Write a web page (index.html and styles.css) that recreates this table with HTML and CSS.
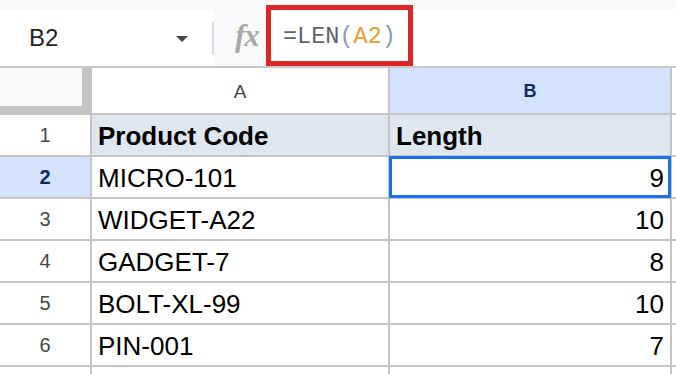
FILE: index.html
```html
<!DOCTYPE html>
<html>
<head>
<meta charset="utf-8">
<link rel="stylesheet" href="styles.css">
</head>
<body>
<div class="topband"></div>
<div class="toolbar">
  <div class="namebox">
    <span class="cellref">B2</span>
    <svg class="caret" width="12" height="6" viewBox="0 0 12 6"><path d="M0 0 L12 0 L6 6 Z" fill="#444746"/></svg>
  </div>
  <div class="sep"></div>
  <div class="fxarea"><span class="fx">fx</span></div>
  <div class="formulaarea">
    <div class="formula-hl"><span class="f-eq">=LEN</span><span class="f-par">(</span><span class="f-ref">A2</span><span class="f-par">)</span></div>
  </div>
</div>
<div class="grid">
  <div class="corner"></div>
  <div class="colhead">A</div>
  <div class="colhead sel">B</div>
  <div class="cell"></div>

  <div class="rowhead">1</div>
  <div class="cell hdr">Product Code</div>
  <div class="cell hdr">Length</div>
  <div class="cell"></div>

  <div class="rowhead sel">2</div>
  <div class="cell">MICRO-101</div>
  <div class="cell num active">9</div>
  <div class="cell"></div>

  <div class="rowhead">3</div>
  <div class="cell">WIDGET-A22</div>
  <div class="cell num">10</div>
  <div class="cell"></div>

  <div class="rowhead">4</div>
  <div class="cell">GADGET-7</div>
  <div class="cell num">8</div>
  <div class="cell"></div>

  <div class="rowhead">5</div>
  <div class="cell">BOLT-XL-99</div>
  <div class="cell num">10</div>
  <div class="cell"></div>

  <div class="rowhead">6</div>
  <div class="cell">PIN-001</div>
  <div class="cell num">7</div>
  <div class="cell"></div>

  <div class="rowhead"></div>
  <div class="cell"></div>
  <div class="cell"></div>
  <div class="cell"></div>
</div>
</body>
</html>
```
FILE: styles.css
```css
html, body {
  margin: 0;
  padding: 0;
  width: 676px;
  height: 374px;
  overflow: hidden;
  background: #ffffff;
  font-family: "Liberation Sans", Arial, sans-serif;
}
.topband {
  height: 10px;
  background: #f8f9fb;
}
.toolbar {
  display: flex;
  height: 56px;
  border-bottom: 2px solid #c7c7c7;
  background: #ffffff;
}
.namebox {
  width: 212px;
  display: flex;
  align-items: center;
  background: #ffffff;
}
.cellref {
  margin-left: 29px;
  font-size: 24px;
  color: #1f1f1f;
  flex: 1;
}
.caret {
  margin-right: 24px;
  margin-top: 2px;
}
.sep {
  width: 2px;
  height: 33px;
  margin-top: 12px;
  background: #d6dde7;
}
.fxarea {
  width: 52px;
  background: #f8f9fa;
  display: flex;
  align-items: center;
  justify-content: flex-start;
}
.fx {
  margin-left: 21px;
  font-family: "Liberation Serif", serif;
  font-style: italic;
  font-weight: bold;
  font-size: 31px;
  color: #a9a9a9;
  letter-spacing: -1px;
  margin-top: -4px;
}
.formulaarea {
  flex: 1;
  background: #ffffff;
  display: flex;
  align-items: flex-start;
  padding-left: 5px;
}
.formula-hl {
  width: 137px;
  height: 51px;
  box-sizing: border-box;
  outline: 5px solid #dc2626;
  display: flex;
  align-items: center;
  padding-left: 12px;
  padding-top: 2px;
  font-family: "Liberation Mono", monospace;
  font-size: 23.5px;
}
.f-eq { color: #5f6368; }
.f-par { color: #8b9bb0; }
.f-ref { color: #f09a36; }

.grid {
  display: grid;
  grid-template-columns: 90px 296px 280px 4px;
  grid-template-rows: 45px repeat(6, 40px) 7px;
  gap: 2px;
  background: #c4c4c4;
}
.corner {
  background: #f8f9fa;
  border-right: 8px solid #c4c4c4;
  border-bottom: 7px solid #c4c4c4;
}
.colhead {
  background: #ffffff;
  display: flex;
  align-items: center;
  justify-content: center;
  font-size: 19px;
  color: #444746;
  padding-top: 2px;
}
.colhead.sel {
  background: #d3e3fd;
  color: #0b2a5e;
  font-weight: bold;
  font-size: 18px;
}
.rowhead {
  background: #ffffff;
  display: flex;
  align-items: center;
  justify-content: center;
  font-size: 20px;
  color: #444746;
}
.rowhead.sel {
  background: #d3e3fd;
  color: #0b2a5e;
  font-weight: bold;
}
.cell {
  background: #ffffff;
  font-size: 26px;
  line-height: 40px;
  color: #000000;
  padding: 1px 6px 0 6px;
  white-space: nowrap;
  overflow: hidden;
}
.cell.hdr {
  background: #dee6ef;
  font-weight: bold;
}
.cell.num {
  text-align: right;
}
.cell.active {
  outline: 3px solid #1a73e8;
  outline-offset: -2px;
}
```
